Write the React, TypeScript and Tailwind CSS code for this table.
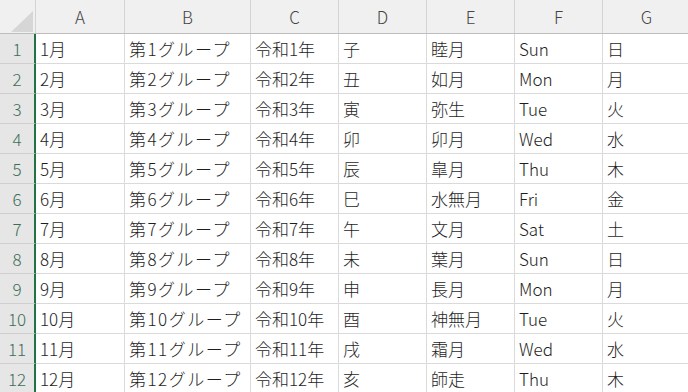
import React from "react";

const cols = ["A", "B", "C", "D", "E", "F", "G"];

const rows = [
  ["1月", "第1グループ", "令和1年", "子", "睦月", "Sun", "日"],
  ["2月", "第2グループ", "令和2年", "丑", "如月", "Mon", "月"],
  ["3月", "第3グループ", "令和3年", "寅", "弥生", "Tue", "火"],
  ["4月", "第4グループ", "令和4年", "卯", "卯月", "Wed", "水"],
  ["5月", "第5グループ", "令和5年", "辰", "皐月", "Thu", "木"],
  ["6月", "第6グループ", "令和6年", "巳", "水無月", "Fri", "金"],
  ["7月", "第7グループ", "令和7年", "午", "文月", "Sat", "土"],
  ["8月", "第8グループ", "令和8年", "未", "葉月", "Sun", "日"],
  ["9月", "第9グループ", "令和9年", "申", "長月", "Mon", "月"],
  ["10月", "第10グループ", "令和10年", "酉", "神無月", "Tue", "火"],
  ["11月", "第11グループ", "令和11年", "戌", "霜月", "Wed", "水"],
  ["12月", "第12グループ", "令和12年", "亥", "師走", "Thu", "木"],
];

const widths = ["w-[89px]", "w-[126px]", "w-[88px]", "w-[88px]", "w-[88px]", "w-[88px]", "w-[88px]"];

const App = () => {
  return (
    <div
      className="w-[688px] h-[392px] overflow-hidden bg-white text-[17px] font-light text-[#1e1e1e]"
      style={{ fontFamily: '"Noto Sans CJK JP", "Noto Sans", sans-serif' }}
    >
      {/* column headers */}
      <div className="flex h-[34px] bg-[#f0f0f0] border-b border-[#bdbdbd]">
        <div className="relative w-[36px] shrink-0 border-r border-[#d4d4d4]">
          <svg className="absolute left-[11px] top-[11px]" width="22" height="21" viewBox="0 0 22 21">
            <polygon points="22,0 22,21 0,21" fill="#d6d6d6" />
          </svg>
        </div>
        {cols.map((c, i) => (
          <div
            key={c}
            className={`${widths[i]} shrink-0 flex items-center justify-center border-r border-[#d4d4d4] text-[#444]`}
          >
            {c}
          </div>
        ))}
      </div>

      {/* data rows */}
      {rows.map((row, r) => (
        <div key={r} className="flex h-[30px]">
          <div className="w-[36px] shrink-0 flex items-center justify-center bg-[#e6e6e6] border-r-2 border-r-[#217346] border-b border-b-[#cfcfcf] text-[#3b6e57]">
            {r + 1}
          </div>
          {row.map((cell, i) => (
            <div
              key={i}
              className={`${widths[i]} shrink-0 flex items-center pl-[4px] border-r border-b border-[#dadada] whitespace-nowrap overflow-hidden ${i === 1 ? "tracking-[1.5px]" : ""}`}
            >
              {cell}
            </div>
          ))}
        </div>
      ))}
    </div>
  );
};

export default App;
